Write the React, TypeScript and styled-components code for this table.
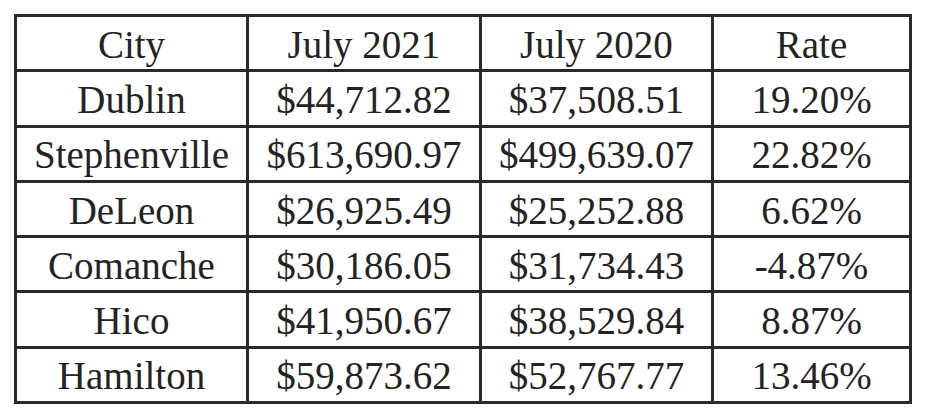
import React from "react";
import styled, { createGlobalStyle } from "styled-components";

const Global = createGlobalStyle`
  html, body { margin: 0; padding: 0; background: #ffffff; }
  body { font-family: "Liberation Serif", "Times New Roman", serif; }
`;

const Page = styled.div`
  width: 927px;
  height: 420px;
  padding: 14px 0 0 14px;
  box-sizing: border-box;
  background: #ffffff;
`;

const Table = styled.div`
  display: grid;
  grid-template-columns: 229px 230px 229px 195px;
  grid-auto-rows: 52.3px;
  gap: 3px;
  border: 3px solid #2a2a2a;
  background: #2a2a2a;
  width: max-content;
`;

const Cell = styled.div`
  background: #ffffff;
  display: flex;
  align-items: center;
  justify-content: center;
  font-family: "Liberation Serif", "Times New Roman", serif;
  font-size: 39px;
  line-height: 1;
  color: #232323;
  white-space: nowrap;
`;

const Text = styled.span`
  display: inline-block;
  transform: scaleY(1.05);
`;

const header = ["City", "July 2021", "July 2020", "Rate"];
const rows: string[][] = [
  ["Dublin", "$44,712.82", "$37,508.51", "19.20%"],
  ["Stephenville", "$613,690.97", "$499,639.07", "22.82%"],
  ["DeLeon", "$26,925.49", "$25,252.88", "6.62%"],
  ["Comanche", "$30,186.05", "$31,734.43", "-4.87%"],
  ["Hico", "$41,950.67", "$38,529.84", "8.87%"],
  ["Hamilton", "$59,873.62", "$52,767.77", "13.46%"],
];

export default function App() {
  return (
    <Page>
      <Global />
      <Table>
        {header.map((h) => (
          <Cell key={h}>
            <Text>{h}</Text>
          </Cell>
        ))}
        {rows.map((r) =>
          r.map((c, i) => (
            <Cell key={r[0] + i}>
              <Text>{c}</Text>
            </Cell>
          ))
        )}
      </Table>
    </Page>
  );
}
